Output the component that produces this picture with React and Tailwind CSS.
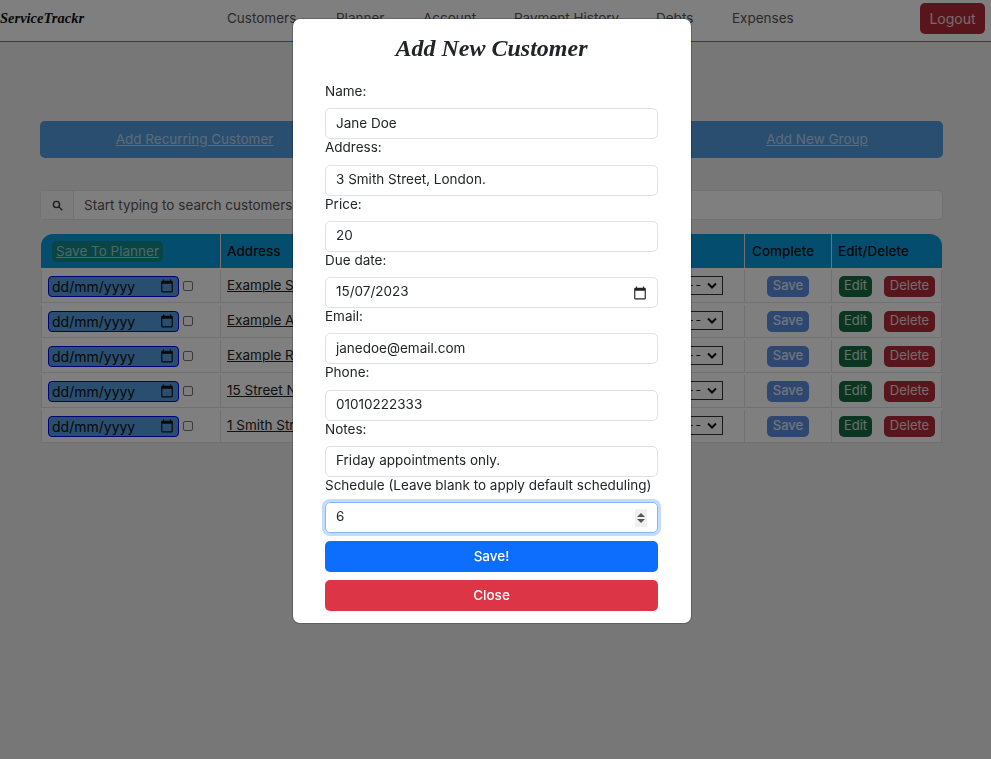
import React from 'react';

const sans = "font-['Inter','Noto_Sans',sans-serif]";
const navItems = [
  { label: 'Customers', width: 'w-[71px]' },
  { label: 'Planner', width: 'w-[49px]' },
  { label: 'Account', width: 'w-[53px]' },
  { label: 'Payment History', width: 'w-[104px]' },
  { label: 'Debts', width: 'w-[38px]' },
  { label: 'Expenses', width: 'w-[58px]' },
];
const rows = ['Example Street', 'Example Avenue', 'Example Road', '15 Street Name', '1 Smith Street'];

function CalendarIcon() {
  return (
    <svg width="14" height="14" viewBox="0 0 24 24" fill="currentColor" className="shrink-0">
      <path d="M20 3h-1V1h-2v2H7V1H5v2H4c-1.1 0-2 .9-2 2v16c0 1.1.9 2 2 2h16c1.1 0 2-.9 2-2V5c0-1.100-.9-2-2-2zm0 18H4V8h16v13z" />
    </svg>
  );
}

function Row({ address }) {
  return (
    <div className="flex h-[35px] border-b border-[#dee2e6] bg-white pt-[2px]">
      <div className="flex w-[180px] items-center gap-1 border-x border-[#dee2e6] pl-[6px]">
        <div className="flex h-[21px] w-[131px] items-center justify-between rounded-[4px] border-[1.500px] border-[#0000ee] bg-[#549ce0] pl-[3px] pr-[4px] text-[14px] text-[#111]">
          <span>dd/mm/yyyy</span>
          <CalendarIcon />
        </div>
        <div className="h-[10px] w-[10px] rounded-[2px] border border-[#777] bg-white" />
      </div>
      <div className="flex flex-1 items-center whitespace-nowrap pb-[2px] pl-[6px] text-[13.500px] text-[#222] underline">{address}</div>
      <div className="flex w-[88px] items-center justify-end border-r border-[#dee2e6] pr-[21px]">
        <div className="mb-[2px] flex h-[19px] w-[60px] items-center justify-end border border-[#333] bg-white pr-[5px] text-[12px] text-[#111]">
          <span className="mr-[4px] tracking-[2px]">--</span>
          <svg width="10" height="7" viewBox="0 0 10 7" fill="none" stroke="#111" strokeWidth="2">
            <path d="M1 1.500l4 4 4-4" />
          </svg>
        </div>
      </div>
      <div className="flex w-[87px] items-center justify-center border-r border-[#dee2e6]">
        <div className="flex h-[21px] w-[42px] items-center justify-center rounded-[5px] bg-[#5a8fe0] text-[13px] font-medium text-white/80">Save</div>
      </div>
      <div className="flex w-[110px] items-center gap-3 border-r border-[#dee2e6] pl-[7px]">
        <div className="flex h-[21px] w-[33px] items-center justify-center rounded-[5px] bg-[#146c43] text-[13px] text-white/80">Edit</div>
        <div className="flex h-[21px] w-[51px] items-center justify-center rounded-[5px] bg-[#b02a37] text-[13px] text-white/80">Delete</div>
      </div>
    </div>
  );
}

function Field({ label, value, date, number }) {
  return (
    <div className="flex flex-col">
      <label className="h-[25.250px] text-[13.500px] leading-[17px] text-[#212529]">{label}</label>
      {number ? (
        <div className="flex h-[31px] items-center justify-between rounded-[5px] border border-[#86b7fe] px-[10px] text-[13.500px] text-[#212529] shadow-[0_0_0_3px_rgba(13,110,253,0.25)]">
          <span className="pb-[2px]">{value}</span>
          <span className="flex h-[18px] w-[12px] flex-col items-center justify-center gap-[2px] bg-[#f0f0f0]">
            <span className="h-0 w-0 border-x-[4px] border-b-[4px] border-x-transparent border-b-[#555]" />
            <span className="h-0 w-0 border-x-[4px] border-t-[4px] border-x-transparent border-t-[#555]" />
          </span>
        </div>
      ) : (
        <div className="flex h-[31px] items-center justify-between rounded-[5px] border border-[#dee2e6] px-[10px] text-[13.500px] text-[#212529]">
          <span className="pb-[2px]">{value}</span>
          {date && <CalendarIcon />}
        </div>
      )}
    </div>
  );
}

export default function App() {
  return (
    <div className={`relative h-[759px] w-[991px] overflow-hidden bg-[#eeeeee] ${sans}`}>
      <div className="flex h-[42px] items-center border-b border-[#0a9bdc] bg-white pb-[4px] pr-[6px]">
        <div className="w-[227px] shrink-0 font-['Liberation_Serif',serif] text-[14.500px] font-bold italic text-[#111]">ServiceTrackr</div>
        <div className="flex gap-[38px] whitespace-nowrap text-[13.500px] text-[#555]">
          {navItems.map((item) => (
            <span key={item.label} className={item.width}>{item.label}</span>
          ))}
        </div>
        <div className="ml-auto flex h-[31px] w-[65px] items-center justify-center rounded-[5px] bg-[#b02a37] text-[14px] text-white/80">Logout</div>
      </div>

      <div className="pl-[40px] pr-[48px] pt-[79px]">
        <div className="grid h-[37px] grid-cols-[309px_1fr_252px] items-center rounded-[5px] bg-[#549ce0] text-center text-[13.500px] text-white/60 underline">
          <span>Add Recurring Customer</span>
          <span />
          <span>Add New Group</span>
        </div>

        <div className="mt-[32px] flex h-[30px] rounded-[5px] border border-[#dee2e6] bg-white text-[13.500px] text-[#555]">
          <div className="flex w-[33px] items-center justify-center border-r border-[#dee2e6] bg-[#f8f9fa]">
            <svg width="11" height="11" viewBox="0 0 16 16" fill="none" stroke="#333" strokeWidth="2">
              <circle cx="6.500" cy="6.500" r="4.500" />
              <path d="M10 10l5 5" />
            </svg>
          </div>
          <div className="flex items-center pl-[10px]">Start typing to search customers</div>
        </div>

        <div className="mx-[1px] mt-[14px]">
          <div className="flex h-[34px] rounded-t-[12px] bg-[#0a9bdc] text-[13.500px] font-medium text-[#111]">
            <div className="flex w-[180px] items-center border-r border-[#dee2e6] pl-[11px]">
              <span className="flex h-[21px] w-[111px] items-center justify-center rounded-[5px] bg-[#128a8a] text-[13.500px] font-normal text-white/60 underline">Save To Planner</span>
            </div>
            <div className="flex flex-1 items-center pl-[6px]">Address</div>
            <div className="flex w-[88px] items-center border-r border-[#dee2e6]" />
            <div className="flex w-[87px] items-center border-r border-[#dee2e6] pl-[7px]">Complete</div>
            <div className="flex w-[110px] items-center pl-[6px]">Edit/Delete</div>
          </div>
          {rows.map((address) => (
            <Row key={address} address={address} />
          ))}
        </div>
      </div>

      {/* modal backdrop */}
      <div className="fixed inset-0 bg-black/50" />
      <div className="absolute left-[293px] top-[19px] w-[398px] rounded-[7px] bg-white pb-[12px] pl-[32px] pr-[33px] shadow-[0_0_0_1px_rgba(0,0,0,0.2)]">
        <h2 className="mb-[15px] mt-[9px] h-[40px] text-center font-['Liberation_Serif',serif] text-[24px] font-bold italic leading-[40px] text-[#212529]">Add New Customer</h2>
        <div className="flex flex-col">
          <Field label="Name:" value="Jane Doe" />
          <Field label="Address:" value="3 Smith Street, London." />
          <Field label="Price:" value="20" />
          <Field label="Due date:" value="15/07/2023" date />
          <Field label="Email:" value="janedoe@email.com" />
          <Field label="Phone:" value="01010222333" />
          <Field label="Notes:" value="Friday appointments only." />
          <Field label="Schedule (Leave blank to apply default scheduling)" value="6" number />
        </div>
        <button className="mt-[8px] flex h-[31px] w-full items-center justify-center rounded-[5px] bg-[#0d6efd] text-[13.500px] font-medium text-white">Save!</button>
        <button className="mt-[8px] flex h-[31px] w-full items-center justify-center rounded-[5px] bg-[#dc3545] text-[13.500px] font-medium text-white">Close</button>
      </div>
    </div>
  );
}
